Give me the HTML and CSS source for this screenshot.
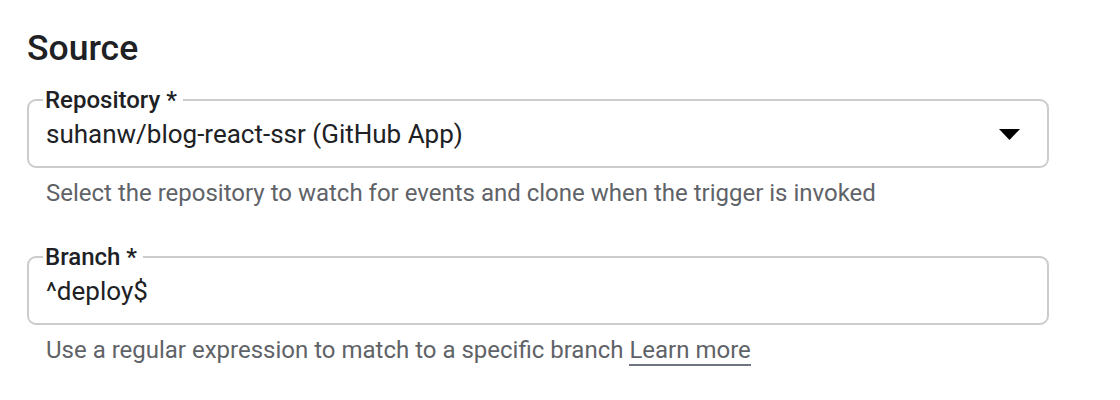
FILE: index.html
```html
<!DOCTYPE html>
<html>
<head>
<meta charset="utf-8">
<link rel="stylesheet" href="styles.css">
</head>
<body>
<section class="source">
  <h2 class="title">Source</h2>
  <div class="field">
    <fieldset class="box">
      <legend class="label">Repository *</legend>
      <div class="row">
        <span class="value">suhanw/blog-react-ssr (GitHub App)</span>
        <svg class="caret" width="21" height="11" viewBox="0 0 21 11"><polygon points="0,0 21,0 10.5,11" fill="#000"/></svg>
      </div>
    </fieldset>
    <p class="hint">Select the repository to watch for events and clone when the trigger is invoked</p>
  </div>
  <div class="field">
    <fieldset class="box">
      <legend class="label">Branch *</legend>
      <div class="row">
        <span class="value">^deploy$</span>
      </div>
    </fieldset>
    <p class="hint">Use a regular expression to match to a specific branch <a class="link" href="#">Learn more</a></p>
  </div>
</section>
</body>
</html>
```

FILE: styles.css
```css
html, body {
  margin: 0;
  padding: 0;
  background: #fff;
}
body {
  font-family: Roboto, "Noto Sans", Arial, sans-serif;
  color: #202124;
}
.source {
  padding: 28px 71px 0 27px;
  display: flex;
  flex-direction: column;
}
.title {
  margin: 0;
  font-size: 35.5px;
  font-weight: 500;
  line-height: 40px;
  color: #202124;
}
.field {
  display: flex;
  flex-direction: column;
}
.field + .field {
  margin-top: 36px;
}
.box {
  margin: 18px 0 0 0;
  padding: 4px 27px 16px 17px;
  border: 2px solid #cccccc;
  border-radius: 9px;
  min-width: 0;
}
.field + .field .box {
  margin-top: 0;
}
.label {
  padding: 0 6px 0 2px;
  margin-left: -3px;
  font-size: 24px;
  font-weight: 500;
  line-height: 28px;
  color: #202124;
}
.row {
  display: flex;
  align-items: center;
  justify-content: space-between;
  height: 32px;
}
.value {
  font-size: 26px;
  line-height: 32px;
}
.caret {
  display: block;
}
.hint {
  margin: 11px 0 0 19px;
  font-size: 24px;
  line-height: 28px;
  color: #5f6368;
}
.link {
  display: inline-block;
  color: #5f6368;
  text-decoration: none;
  border-bottom: 2px solid #6f7482;
}
```
